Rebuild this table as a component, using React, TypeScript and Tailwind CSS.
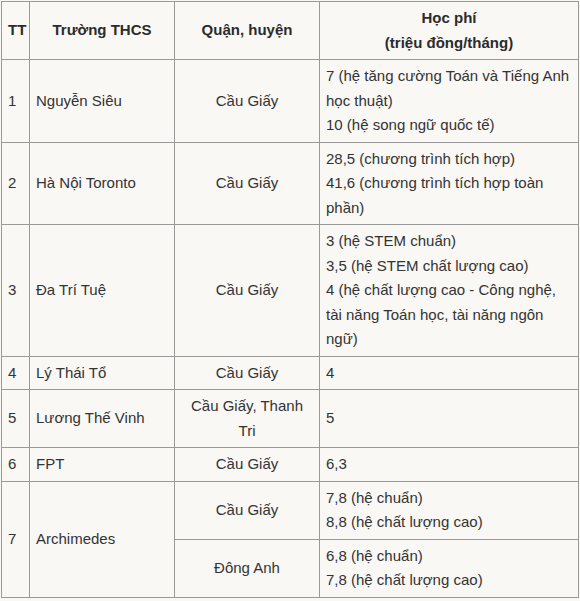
import React from "react";

const cell = "border border-[#9a9a9a] px-[6px] py-[4px] align-middle";

export default function App() {
  return (
    <div className="w-[580px] h-[601px] bg-[#f9f8f5] overflow-hidden pt-[1px] pl-[1px]">
      <table
        className="table-fixed border-collapse w-[577px] text-[15px] leading-[24.5px] text-[#333]"
        style={{ fontFamily: '"Liberation Sans", Arial, sans-serif' }}
      >
        <colgroup>
          <col className="w-[28px]" />
          <col className="w-[145px]" />
          <col className="w-[145px]" />
          <col className="w-[259px]" />
        </colgroup>
        <thead>
          <tr className="font-bold text-[#2b2b2b]">
            <th className={`${cell} text-left`}>TT</th>
            <th className={`${cell} text-center`}>Trường THCS</th>
            <th className={`${cell} text-center`}>Quận, huyện</th>
            <th className={`${cell} text-center`}>
              Học phí
              <br />
              (triệu đồng/tháng)
            </th>
          </tr>
        </thead>
        <tbody>
          <tr>
            <td className={cell}>1</td>
            <td className={cell}>Nguyễn Siêu</td>
            <td className={`${cell} text-center`}>Cầu Giấy</td>
            <td className={cell}>
              7 (hệ tăng cường Toán và Tiếng Anh học thuật)
              <br />
              10 (hệ song ngữ quốc tế)
            </td>
          </tr>
          <tr>
            <td className={cell}>2</td>
            <td className={cell}>Hà Nội Toronto</td>
            <td className={`${cell} text-center`}>Cầu Giấy</td>
            <td className={cell}>
              28,5 (chương trình tích hợp)
              <br />
              41,6 (chương trình tích hợp toàn phần)
            </td>
          </tr>
          <tr>
            <td className={cell}>3</td>
            <td className={cell}>Đa Trí Tuệ</td>
            <td className={`${cell} text-center`}>Cầu Giấy</td>
            <td className={cell}>
              3 (hệ STEM chuẩn)
              <br />
              3,5 (hệ STEM chất lượng cao)
              <br />
              4 (hệ chất lượng cao - Công nghệ, tài năng Toán học, tài năng ngôn ngữ)
            </td>
          </tr>
          <tr>
            <td className={cell}>4</td>
            <td className={cell}>Lý Thái Tổ</td>
            <td className={`${cell} text-center`}>Cầu Giấy</td>
            <td className={cell}>4</td>
          </tr>
          <tr>
            <td className={cell}>5</td>
            <td className={cell}>Lương Thế Vinh</td>
            <td className={`${cell} text-center`}>Cầu Giấy, Thanh Tri</td>
            <td className={cell}>5</td>
          </tr>
          <tr>
            <td className={cell}>6</td>
            <td className={cell}>FPT</td>
            <td className={`${cell} text-center`}>Cầu Giấy</td>
            <td className={cell}>6,3</td>
          </tr>
          <tr>
            <td className={cell} rowSpan={2}>7</td>
            <td className={cell} rowSpan={2}>Archimedes</td>
            <td className={`${cell} text-center`}>Cầu Giấy</td>
            <td className={cell}>
              7,8 (hệ chuẩn)
              <br />
              8,8 (hệ chất lượng cao)
            </td>
          </tr>
          <tr>
            <td className={`${cell} text-center`}>Đông Anh</td>
            <td className={cell}>
              6,8 (hệ chuẩn)
              <br />
              7,8 (hệ chất lượng cao)
            </td>
          </tr>
        </tbody>
      </table>
    </div>
  );
}
